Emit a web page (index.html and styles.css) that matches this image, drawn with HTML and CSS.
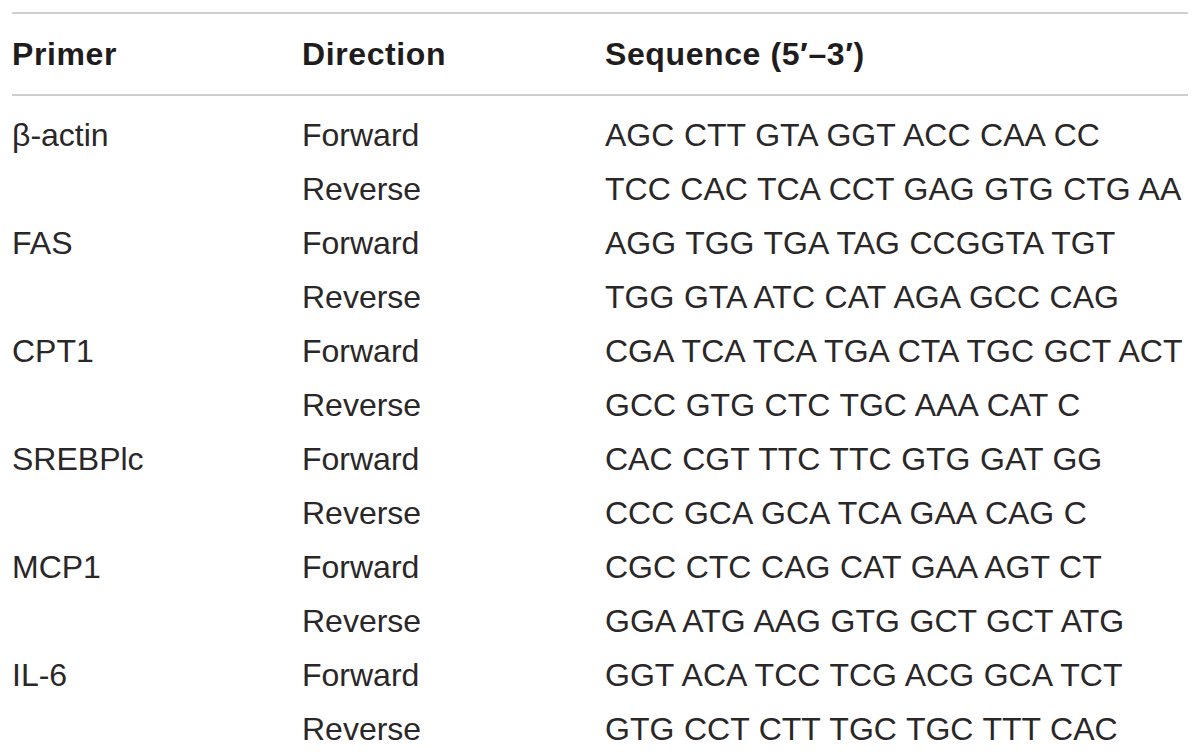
FILE: index.html
```html
<!DOCTYPE html>
<html>
<head>
<meta charset="utf-8">
<link rel="stylesheet" href="styles.css">
</head>
<body>
<table class="primers">
  <thead>
    <tr><th class="c1">Primer</th><th class="c2">Direction</th><th class="c3">Sequence (5′–3′)</th></tr>
  </thead>
  <tbody>
    <tr class="first"><td>β-actin</td><td>Forward</td><td>AGC CTT GTA GGT ACC CAA CC</td></tr>
    <tr><td></td><td>Reverse</td><td>TCC CAC TCA CCT GAG GTG CTG AA</td></tr>
    <tr><td>FAS</td><td>Forward</td><td>AGG TGG TGA TAG CCGGTA TGT</td></tr>
    <tr><td></td><td>Reverse</td><td>TGG GTA ATC CAT AGA GCC CAG</td></tr>
    <tr><td>CPT1</td><td>Forward</td><td>CGA TCA TCA TGA CTA TGC GCT ACT</td></tr>
    <tr><td></td><td>Reverse</td><td>GCC GTG CTC TGC AAA CAT C</td></tr>
    <tr><td>SREBPlc</td><td>Forward</td><td>CAC CGT TTC TTC GTG GAT GG</td></tr>
    <tr><td></td><td>Reverse</td><td>CCC GCA GCA TCA GAA CAG C</td></tr>
    <tr><td>MCP1</td><td>Forward</td><td>CGC CTC CAG CAT GAA AGT CT</td></tr>
    <tr><td></td><td>Reverse</td><td>GGA ATG AAG GTG GCT GCT ATG</td></tr>
    <tr><td>IL-6</td><td>Forward</td><td>GGT ACA TCC TCG ACG GCA TCT</td></tr>
    <tr><td></td><td>Reverse</td><td>GTG CCT CTT TGC TGC TTT CAC</td></tr>
  </tbody>
</table>
</body>
</html>
```
FILE: styles.css
```css
html, body {
  margin: 0;
  padding: 0;
  background: #ffffff;
}
body {
  padding: 12px 12px 0 12px;
  font-family: "Liberation Sans", Arial, sans-serif;
  color: #2a2728;
}
.primers {
  width: 1176px;
  border-collapse: collapse;
  font-size: 32px;
  table-layout: fixed;
}
.primers thead tr {
  border-top: 2px solid #cfcfcf;
  border-bottom: 2px solid #cfcfcf;
}
.primers th {
  height: 80px;
  padding: 0;
  text-align: left;
  font-weight: bold;
  letter-spacing: 0.6px;
  vertical-align: middle;
  color: #1f1c1d;
}
.primers .c1 { width: 290px; }
.primers .c2 { width: 303px; }
.primers td {
  height: 54px;
  padding: 0;
  line-height: 54px;
  vertical-align: middle;
  white-space: nowrap;
  word-spacing: 0.7px;
  font-weight: normal;
}
.primers tr.first td {
  padding-top: 12px;
}
```
